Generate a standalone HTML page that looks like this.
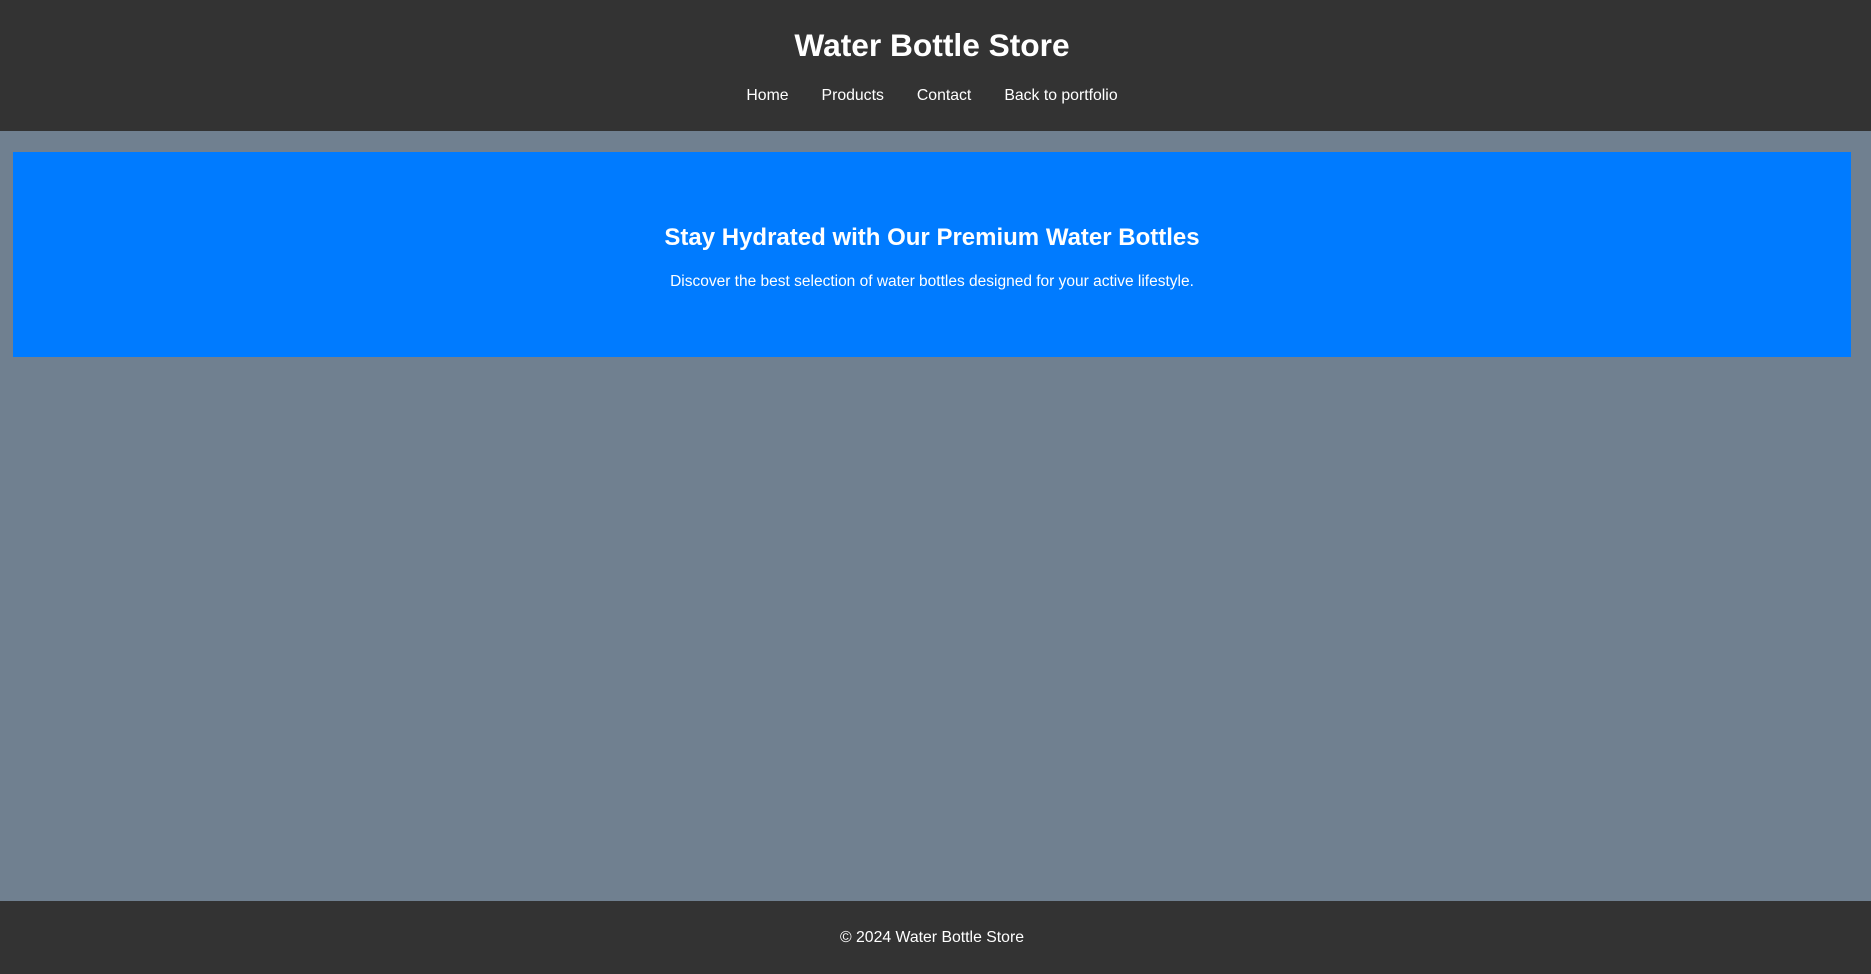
<!DOCTYPE html>
<html><head><meta charset="utf-8"><style>
*{margin:0;padding:0;box-sizing:border-box}
html,body{width:1871px;height:974px;overflow:hidden}
body{background:#708090;font-family:"Liberation Sans",Arial,sans-serif;color:#fff;position:relative}
header{background:#333;height:131px;text-align:center;padding-top:26px;padding-right:7px}
h1{font-size:31.7px;font-weight:bold;line-height:38px}
nav{margin-top:22px;font-size:15.8px;line-height:20px}
nav a{color:#fff;text-decoration:none;margin:0 16.5px}
.hero{position:absolute;left:13px;top:152px;width:1838px;height:205px;background:#007bff;text-align:center}
.hero h2{font-size:24px;font-weight:bold;position:absolute;top:72px;width:100%;line-height:28px}
.hero p{font-size:15.5px;position:absolute;top:120px;width:100%;line-height:20px}
footer{position:absolute;left:0;top:901px;width:1871px;height:73px;background:#333;text-align:center;font-size:15.8px;line-height:20px;padding-top:27px;padding-right:7px}
</style></head><body>
<header><h1>Water Bottle Store</h1>
<nav><a>Home</a><a>Products</a><a>Contact</a><a>Back to portfolio</a></nav></header>
<div class="hero"><h2>Stay Hydrated with Our Premium Water Bottles</h2>
<p>Discover the best selection of water bottles designed for your active lifestyle.</p></div>
<footer>© 2024 Water Bottle Store</footer>
</body></html>
